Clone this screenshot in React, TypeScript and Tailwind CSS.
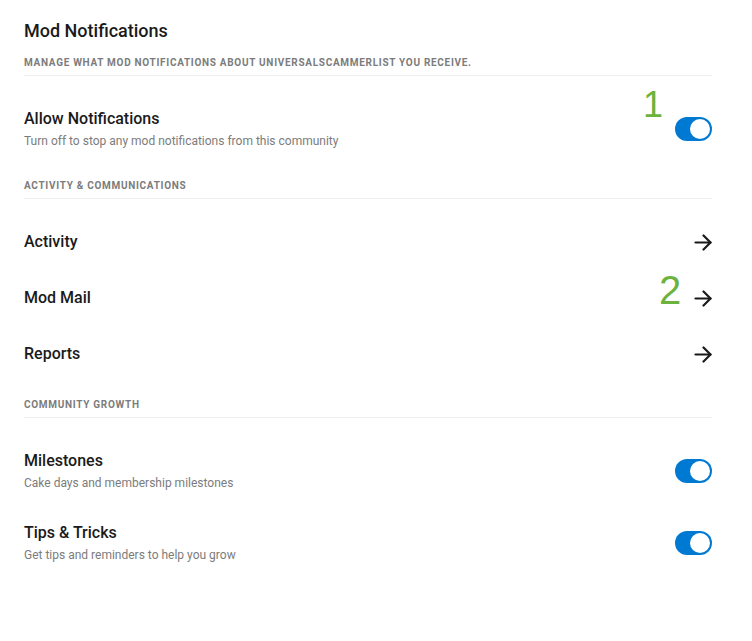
const font = { fontFamily: 'Roboto, "Noto Sans", sans-serif' };

function Toggle() {
  return (
    <div className="relative h-[24px] w-[37px] shrink-0 rounded-full bg-[#0079d3]">
      <span className="absolute right-[2px] top-[2px] h-[20px] w-[20px] rounded-full bg-white" />
    </div>
  );
}

function Arrow() {
  return (
    <svg width="18" height="17" viewBox="0 0 18 17" fill="none" stroke="#1a1a1b" strokeWidth="2.2" strokeLinecap="round" strokeLinejoin="round">
      <path d="M1.5 8.5H16.5" />
      <path d="M9.5 1.5L16.5 8.5L9.5 15.5" />
    </svg>
  );
}

function SectionLabel({ children, top }: { children: string; top: string }) {
  return (
    <div className={`${top} border-b border-[#edeff1] pb-[6px] text-[10px] font-bold uppercase leading-[12px] tracking-[0.7px] text-[#7c7c7c]`}>
      {children}
    </div>
  );
}

function ToggleRow({ title, desc, top }: { title: string; desc: string; top: string }) {
  return (
    <div className={`${top} flex items-center justify-between`}>
      <div>
        <div className="text-[16px] font-medium leading-[20px] text-[#1a1a1b]">{title}</div>
        <div className="mt-[4px] text-[12px] leading-[16px] text-[#7c7c7c]">{desc}</div>
      </div>
      <Toggle />
    </div>
  );
}

function LinkRow({ title }: { title: string }) {
  return (
    <div className="flex h-[56px] items-center justify-between">
      <div className="text-[16px] font-medium leading-[20px] text-[#1a1a1b]">{title}</div>
      <Arrow />
    </div>
  );
}

export default function App() {
  return (
    <div className="min-h-[641px] w-[752px] bg-white" style={font}>
      <div className="relative ml-[24px] w-[688px] pt-[20px]">
        <h1 className="text-[18px] font-medium leading-[22px] text-[#1a1a1b]">Mod Notifications</h1>

        <SectionLabel top="mt-[15px]">Manage what mod notifications about UniversalScammerList you receive.</SectionLabel>
        <ToggleRow top="mt-[33px]" title="Allow Notifications" desc="Turn off to stop any mod notifications from this community" />

        <SectionLabel top="mt-[31px]">Activity &amp; Communications</SectionLabel>
        <div className="mt-[15px]">
          <LinkRow title="Activity" />
          <LinkRow title="Mod Mail" />
          <LinkRow title="Reports" />
        </div>

        <SectionLabel top="mt-[17px]">Community Growth</SectionLabel>
        <ToggleRow top="mt-[33px]" title="Milestones" desc="Cake days and membership milestones" />
        <ToggleRow top="mt-[32px]" title="Tips &amp; Tricks" desc="Get tips and reminders to help you grow" />

        {/* annotation numbers laid over the screenshot */}
        <span className="absolute left-[619px] top-[85px] text-[36px] leading-[40px] text-[#6cb33e]" style={{ fontFamily: '"Liberation Sans", sans-serif' }}>1</span>
        <span className="absolute left-[635px] top-[267px] text-[40px] leading-[46px] text-[#6cb33e]" style={{ fontFamily: '"Liberation Sans", sans-serif' }}>2</span>
      </div>
    </div>
  );
}
